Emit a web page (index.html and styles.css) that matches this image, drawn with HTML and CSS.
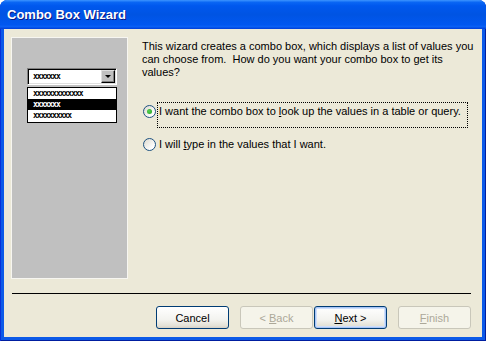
FILE: index.html
```html
<!DOCTYPE html>
<html lang="en">
<head>
    <meta charset="UTF-8">
    <title>Combo Box Wizard</title>
    <link rel="stylesheet" href="styles.css">
</head>
<body>
    <div class="window">
        <div class="titlebar">Combo Box Wizard</div>
        <div class="client">
            <div class="main">
                <div class="preview">
                    <div class="combo">
                        <span class="combo-text">xxxxxxx</span>
                        <span class="combo-btn"><span class="arrow"></span></span>
                    </div>
                    <div class="combo-list">
                        <div class="combo-row">xxxxxxxxxxxxx</div>
                        <div class="combo-row selected">xxxxxxx</div>
                        <div class="combo-row">xxxxxxxxxx</div>
                    </div>
                </div>
                <div class="content">
                    <p class="intro">This wizard creates a combo box, which displays a list of values you<br>can choose from.&nbsp; How do you want your combo box to get its<br>values?</p>
                    <div class="options">
                        <div class="option">
                            <span class="radio checked"></span>
                            <span class="option-label focus">I want the combo box to <u>l</u>ook up the values in a table or query.</span>
                        </div>
                        <div class="option">
                            <span class="radio"></span>
                            <span class="option-label">I will <u>t</u>ype in the values that I want.</span>
                        </div>
                    </div>
                </div>
            </div>
            <div class="separator"></div>
            <div class="buttons">
                <button class="btn">Cancel</button>
                <button class="btn back" disabled>&lt; <u>B</u>ack</button>
                <button class="btn default"><u>N</u>ext &gt;</button>
                <button class="btn finish" disabled><u>F</u>inish</button>
            </div>
        </div>
    </div>
</body>
</html>
```

FILE: styles.css
```css
body {
    margin: 0;
    background-color: #ffffff;
    font-family: "Liberation Sans", Arial, sans-serif;
    font-size: 11px;
}

.window {
    width: 486px;
    height: 341px;
    box-sizing: border-box;
    display: flex;
    flex-direction: column;
    background-color: #0c5ae8;
    border-radius: 8px 8px 0 0;
    padding: 0 4px 4px 4px;
    box-shadow: inset 1px 0 0 #0831d9, inset -1px 0 0 #001ea0, inset 0 -1px 0 #001ea0;
}

.titlebar {
    height: 29px;
    margin: 0 -4px;
    padding-left: 7px;
    box-sizing: border-box;
    border-radius: 7px 7px 0 0;
    background: linear-gradient(to bottom, #3d95ff 0%, #0a66f4 8%, #0058ee 20%, #0054e3 50%, #0157f0 85%, #0a60f5 92%, #003dd7 100%);
    color: #ffffff;
    font-weight: bold;
    font-size: 13px;
    line-height: 30px;
    text-shadow: 1px 1px 0 #0a1883;
}

.client {
    flex: 1;
    background-color: #ece9d8;
    padding: 8px 11px 0 7px;
    display: flex;
    flex-direction: column;
}

.main {
    display: flex;
    height: 242px;
}

.preview {
    width: 117px;
    height: 242px;
    flex-shrink: 0;
    background-color: #c0c0c0;
    border: 1px solid #f7f6f1;
    padding: 30px 0 0 15px;
    box-sizing: border-box;
}

.combo {
    width: 90px;
    height: 17px;
    box-sizing: border-box;
    background-color: #ffffff;
    border: 1px solid;
    border-color: #808080 #ffffff #ffffff #808080;
    box-shadow: inset 1px 1px 0 #000000, inset -1px -1px 0 #dfdfdf;
    display: flex;
    align-items: center;
    justify-content: space-between;
    padding: 1px 1px 1px 5px;
}

.combo-text,
.combo-row {
    font-family: "DejaVu Sans Mono", monospace;
    font-weight: bold;
    font-size: 8px;
    letter-spacing: -1px;
    line-height: 11px;
}

.combo-btn {
    width: 14px;
    height: 13px;
    box-sizing: border-box;
    background-color: #c0c0c0;
    border: 1px solid;
    border-color: #dfdfdf #000000 #000000 #dfdfdf;
    box-shadow: inset -1px -1px 0 #808080;
    display: flex;
    align-items: center;
    justify-content: center;
}

.arrow {
    width: 0;
    height: 0;
    border-left: 3px solid transparent;
    border-right: 3px solid transparent;
    border-top: 3px solid #000000;
}

.combo-list {
    width: 90px;
    margin-top: 2px;
    box-sizing: border-box;
    background-color: #ffffff;
    border: 1px solid #000000;
    padding: 0 0 1px 0;
}

.combo-row {
    padding-left: 5px;
    height: 11px;
}

.combo-row.selected {
    background-color: #000000;
    color: #ffffff;
}

.content {
    flex-shrink: 0;
    width: 330px;
    margin-left: 14px;
    padding-top: 3px;
    color: #000000;
}

.intro {
    margin: 0;
    line-height: 13px;
    white-space: nowrap;
}

.options {
    margin-top: 23px;
    display: flex;
    flex-direction: column;
    gap: 7px;
}

.option {
    display: flex;
    align-items: flex-start;
    margin-left: 1px;
}

.radio {
    width: 13px;
    height: 13px;
    box-sizing: border-box;
    border-radius: 50%;
    border: 1px solid #1c5180;
    background: linear-gradient(135deg, #dcd9ce 0%, #ffffff 80%);
    margin-top: 3px;
    display: flex;
    align-items: center;
    justify-content: center;
    flex-shrink: 0;
}

.radio.checked::after {
    content: "";
    width: 5px;
    height: 5px;
    border-radius: 50%;
    background: radial-gradient(circle at 40% 40%, #55d051, #21a121);
}

.option-label {
    margin-left: 1px;
    padding: 2px 1px;
    line-height: 13px;
    border: 1px solid transparent;
}

.option-label.focus {
    border: 1px dotted #000000;
    width: 311px;
    height: 26px;
    box-sizing: border-box;
    padding-top: 2px;
}

.separator {
    margin-top: 14px;
    margin-left: 1px;
    border-top: 1px solid #000000;
}

.buttons {
    display: flex;
    justify-content: flex-end;
    margin-top: 12px;
}

.btn {
    width: 73px;
    height: 23px;
    margin-left: 11px;
    font-family: "Liberation Sans", Arial, sans-serif;
    font-size: 11px;
    color: #000000;
    border: 1px solid #003c74;
    border-radius: 3px;
    background: linear-gradient(to bottom, #ffffff 0%, #f3f3ef 60%, #e3e1d6 90%, #d6d0c5 100%);
    padding: 0;
}

.btn.back {
    margin-right: -10px;
}

.btn.default {
    box-shadow: inset 0 0 0 1px #a9c6f7, inset 0 0 0 2px #cedffa;
}

.btn:disabled {
    color: #aca899;
    border-color: #c9c7ba;
    background: #f5f4ea;
}

u {
    text-decoration: underline;
}
```
